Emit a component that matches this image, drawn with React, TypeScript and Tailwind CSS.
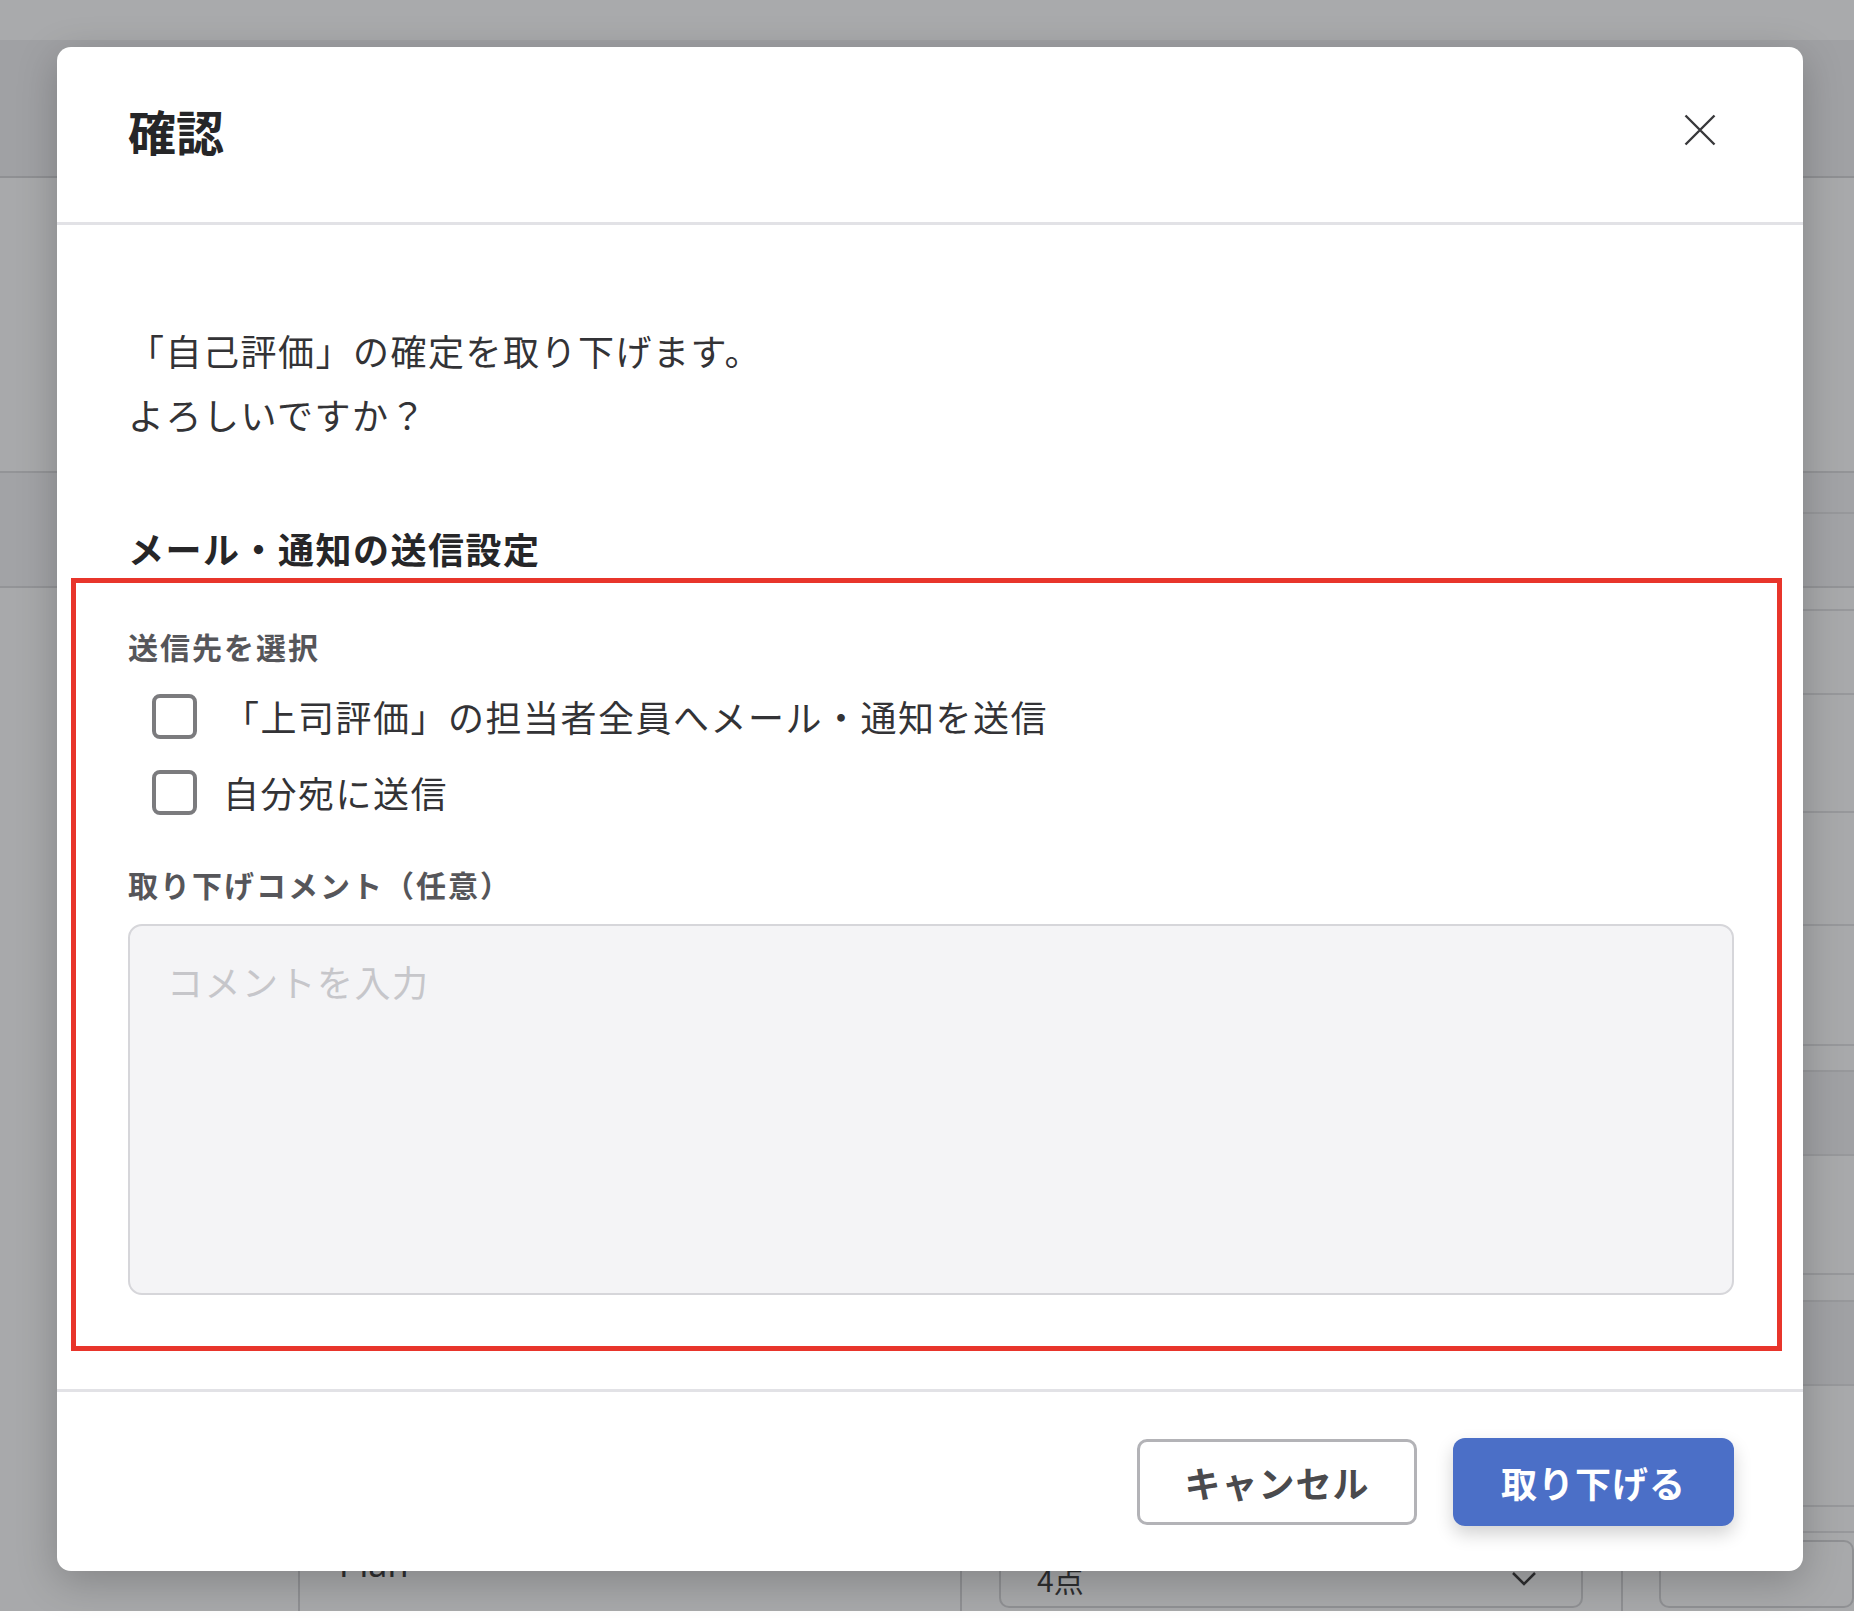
import React from "react";

const FONT = "font-['Noto_Sans_CJK_JP','Noto_Sans',sans-serif]";

const rows = [
  { h: "h-[23px]", dark: false },
  { h: "h-[84px]", dark: false },
  { h: "h-[118px]", dark: false },
  { h: "h-[113px]", dark: false },
  { h: "h-[120px]", dark: false },
  { h: "h-[26px]", dark: false },
  { h: "h-[84px]", dark: true },
  { h: "h-[119px]", dark: false },
  { h: "h-[27px]", dark: false },
  { h: "h-[84px]", dark: true },
  { h: "h-[121px]", dark: false },
  { h: "h-[26px]", dark: false },
];

function Backdrop() {
  return (
    <div className="flex flex-col h-full">
      <div className="h-[40px] bg-[#a9aaac]" />
      <div className="h-[138px] bg-[#a0a1a4] border-b-2 border-[#8f9093]" />
      <div className="h-[295px] bg-[#a8a9ab] border-b-2 border-[#939497]" />
      <div className="h-[115px] bg-[#a2a3a6] border-b-2 border-[#939497] flex">
        <div className="w-[250px]" />
        <div className="flex-1 h-[41px] border-b-2 border-[#97989b]" />
      </div>
      <div className="h-[1023px] flex bg-[#a8a9ab]">
        <div className="w-[298px]" />
        <div className="flex-1 flex flex-col border-l-2 border-[#8f9093]">
          {rows.map((r, i) => (
            <div
              key={i}
              className={`${r.h} border-b-2 border-[#97989b] ${r.dark ? "bg-[#a0a1a4]" : ""}`}
            />
          ))}
          <div className="h-[78px] flex">
            <div className="w-[660px] pl-[39px] pt-[14px]">
              <span className="font-['Noto_Sans',sans-serif] text-[34px] leading-none text-[#2e2e30]">
                Plan
              </span>
            </div>
            <div className="w-[661px] border-l-2 border-[#8f9093] pl-[37px] pt-[7px]">
              <div className="w-[584px] h-[68px] rounded-[10px] border-2 border-[#8f9093] flex items-center justify-between pl-[36px] pr-[44px] pt-[10px]">
                <span className="text-[30px] leading-none text-[#2e2e30]">4点</span>
                <svg width="26" height="16" viewBox="0 0 26 16" fill="none">
                  <path d="M2 2 L13 13 L24 2" stroke="#2e2e30" strokeWidth="2.5" />
                </svg>
              </div>
            </div>
            <div className="flex-1 border-l-2 border-[#8f9093] pl-[36px] pt-[7px]">
              <div className="h-[68px] rounded-[10px] border-2 border-[#8f9093]" />
            </div>
          </div>
        </div>
      </div>
      <div className="h-[7px] bg-white" />
    </div>
  );
}

function Checkbox({ label }: { label: string }) {
  return (
    <label className="flex items-center h-[64px] pl-[24px] gap-[26px]">
      <span className="w-[45px] h-[45px] rounded-[8px] border-4 border-[#7b7b7e] bg-white shrink-0" />
      <span className="text-[36px] tracking-[1.5px] leading-none text-[#333336]">{label}</span>
    </label>
  );
}

export default function App() {
  return (
    <div className={`relative w-[1854px] h-[1618px] overflow-hidden bg-white ${FONT}`}>
      <Backdrop />

      <div className="absolute left-[57px] top-[47px] w-[1746px] rounded-[14px] bg-white shadow-[0_10px_40px_rgba(0,0,0,0.22)]">
        <div className="h-[178px] flex items-center justify-between pl-[71px] pr-[87px] pb-[9px] border-b-[3px] border-[#e2e2e6]">
          <h1 className="text-[48px] font-bold leading-none text-[#262628]">確認</h1>
          <button className="w-[32px] h-[32px]">
            <svg width="32" height="32" viewBox="0 0 32 32" fill="none">
              <path d="M1.5 1.5 L30.5 30.5 M30.5 1.5 L1.5 30.5" stroke="#38383b" strokeWidth="2.4" />
            </svg>
          </button>
        </div>

        <div className="pt-[93px] pb-[38px] pl-[71px] pr-[69px]">
          <p className="text-[36px] tracking-[1.5px] leading-[64px] text-[#333336]">
            「自己評価」の確定を取り下げます。
            <br />
            よろしいですか？
          </p>

          <h2 className="mt-[78px] text-[36px] tracking-[1.5px] font-bold leading-[48px] text-[#262628]">
            メール・通知の送信設定
          </h2>

          <div className="mt-[6px] -ml-[57px] -mr-[48px] border-[5px] border-[#e8352b] pl-[52px] pr-[43px] pt-[43px] pb-[51px]">
            <div className="text-[30px] tracking-[2px] font-bold leading-[40px] text-[#56565a]">
              送信先を選択
            </div>
            <div className="mt-[18px] flex flex-col gap-[12px]">
              <Checkbox label="「上司評価」の担当者全員へメール・通知を送信" />
              <Checkbox label="自分宛に送信" />
            </div>
            <div className="mt-[40px] text-[30px] tracking-[2px] font-bold leading-[40px] text-[#56565a]">
              取り下げコメント（任意）
            </div>
            <textarea
              placeholder="コメントを入力"
              className="mt-[20px] block w-full h-[371px] resize-none rounded-[14px] border-2 border-[#d6d6da] bg-[#f4f4f6] pl-[37px] pt-[31px] text-[36px] tracking-[1.5px] leading-[48px] text-[#333336] placeholder:text-[#c6c6ca] outline-none"
            />
          </div>
        </div>

        <div className="h-[182px] border-t-[3px] border-[#e2e2e6] flex items-center justify-end gap-[36px] pr-[69px]">
          <button className="w-[280px] h-[86px] rounded-[10px] border-[3px] border-[#b3b3b7] bg-white text-[36px] tracking-[1px] font-bold text-[#4a4a4d]">
            キャンセル
          </button>
          <button className="w-[281px] h-[88px] rounded-[12px] bg-[#4b6fc7] text-[36px] tracking-[1px] font-bold text-white shadow-[0_8px_18px_rgba(0,0,0,0.18)]">
            取り下げる
          </button>
        </div>
      </div>
    </div>
  );
}
